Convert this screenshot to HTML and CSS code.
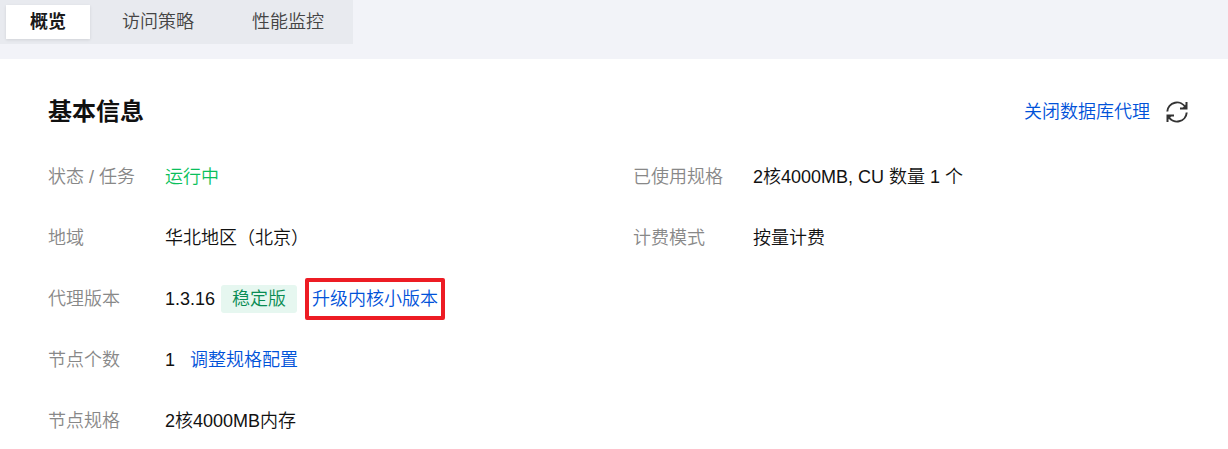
FILE: index.html
```html
<!DOCTYPE html>
<html lang="zh-CN">
<head>
<meta charset="UTF-8" />
<title>数据库代理 - 概览</title>
<link rel="stylesheet" href="styles.css">
</head>
<body>
<nav class="tab-bar">
  <div class="tabs" role="tablist">
    <button type="button" class="tab active" role="tab" aria-selected="true">概览</button>
    <button type="button" class="tab" role="tab" aria-selected="false">访问策略</button>
    <button type="button" class="tab" role="tab" aria-selected="false">性能监控</button>
  </div>
</nav>

<main class="panel">
  <header class="panel-header">
    <h1>基本信息</h1>
    <div class="actions">
      <a href="#">关闭数据库代理</a>
      <button type="button" class="refresh" aria-label="刷新">
        <svg viewBox="0 0 24 24" width="24" height="24" fill="none" stroke="#333" stroke-width="2">
          <path d="M2.300 11.500A9.700 9.700 0 0 1 20.500 7.500" />
          <path d="M21.500 2v6.500h-6.500" />
          <path d="M21.700 12.500A9.700 9.700 0 0 1 3.500 16.500" />
          <path d="M2.500 22v-6.500h6.500" />
          <path d="M21.500 4v4.500h-4.500zM2.500 20v-4.500h4.500z" fill="#333" stroke="none" />
        </svg>
      </button>
    </div>
  </header>

  <div class="info">
    <dl class="info-list">
      <div class="row"><dt>状态 / 任务</dt><dd class="running">运行中</dd></div>
      <div class="row"><dt>地域</dt><dd>华北地区（北京）</dd></div>
      <div class="row">
        <dt>代理版本</dt>
        <dd>1.3.16 <span class="tag">稳定版</span><a href="#" class="highlight">升级内核小版本</a></dd>
      </div>
      <div class="row"><dt>节点个数</dt><dd>1 <a href="#" class="adjust">调整规格配置</a></dd></div>
      <div class="row"><dt>节点规格</dt><dd>2核4000MB内存</dd></div>
    </dl>
    <dl class="info-list wide">
      <div class="row"><dt>已使用规格</dt><dd>2核4000MB, CU 数量 1 个</dd></div>
      <div class="row"><dt>计费模式</dt><dd>按量计费</dd></div>
    </dl>
  </div>
</main>
</body>
</html>
```

FILE: styles.css
```css
* {
  box-sizing: border-box;
}
body {
  margin: 0;
  background: #fff;
  color: #111;
  font-family: "Liberation Sans", "Noto Sans CJK SC", sans-serif;
  font-size: 18px;
  font-weight: 350;
  line-height: 26px;
}
a {
  color: #0052d9;
  text-decoration: none;
}
button {
  border: 0;
  background: none;
  font: inherit;
  cursor: pointer;
}

/* 顶部标签 */
.tab-bar {
  display: flex;
  padding-bottom: 15px;
  background: #f2f3f8;
}
.tabs {
  display: flex;
  align-items: center;
  height: 44px;
  background: #e8eaef;
}
.tab {
  height: 34px;
  padding: 0 29px;
  color: #444;
}
.tab.active {
  margin: 0 3px 0 6px;
  padding: 0 24px;
  background: #fff;
  box-shadow: 0 1px 3px rgb(0 0 0 / 0.1);
  color: #1a1a1a;
  font-weight: 700;
}

/* 基本信息 */
.panel {
  padding: 34px 39px 0 48px;
}
.panel-header {
  display: flex;
  justify-content: space-between;
  align-items: center;
  height: 38px;
  margin-bottom: 15px;
}
h1 {
  margin: 0;
  font-size: 24px;
  line-height: 36px;
}
.actions {
  display: flex;
  align-items: center;
  gap: 15px;
}
.refresh {
  display: flex;
  padding: 0;
}
.info {
  display: grid;
  grid-template-columns: 1fr 1fr;
  gap: 29px;
}
.info-list {
  margin: 0;
}
.row {
  display: flex;
  align-items: center;
  min-height: 61px;
}
dt {
  flex: none;
  width: 117px;
  color: #888;
}
.wide dt {
  width: 120px;
}
dd {
  display: flex;
  align-items: center;
  margin: 0;
}
.running {
  color: #0abf5b;
}
.tag {
  margin: 0 8px 0 6px;
  padding: 1px 11px;
  border-radius: 3px;
  background: #e6f7f0;
  color: #098c54;
}
.highlight {
  padding: 4px 3px;
  border: 4px solid #ed1c24;
  border-radius: 2px;
}
.adjust {
  margin-left: 15px;
}
```
